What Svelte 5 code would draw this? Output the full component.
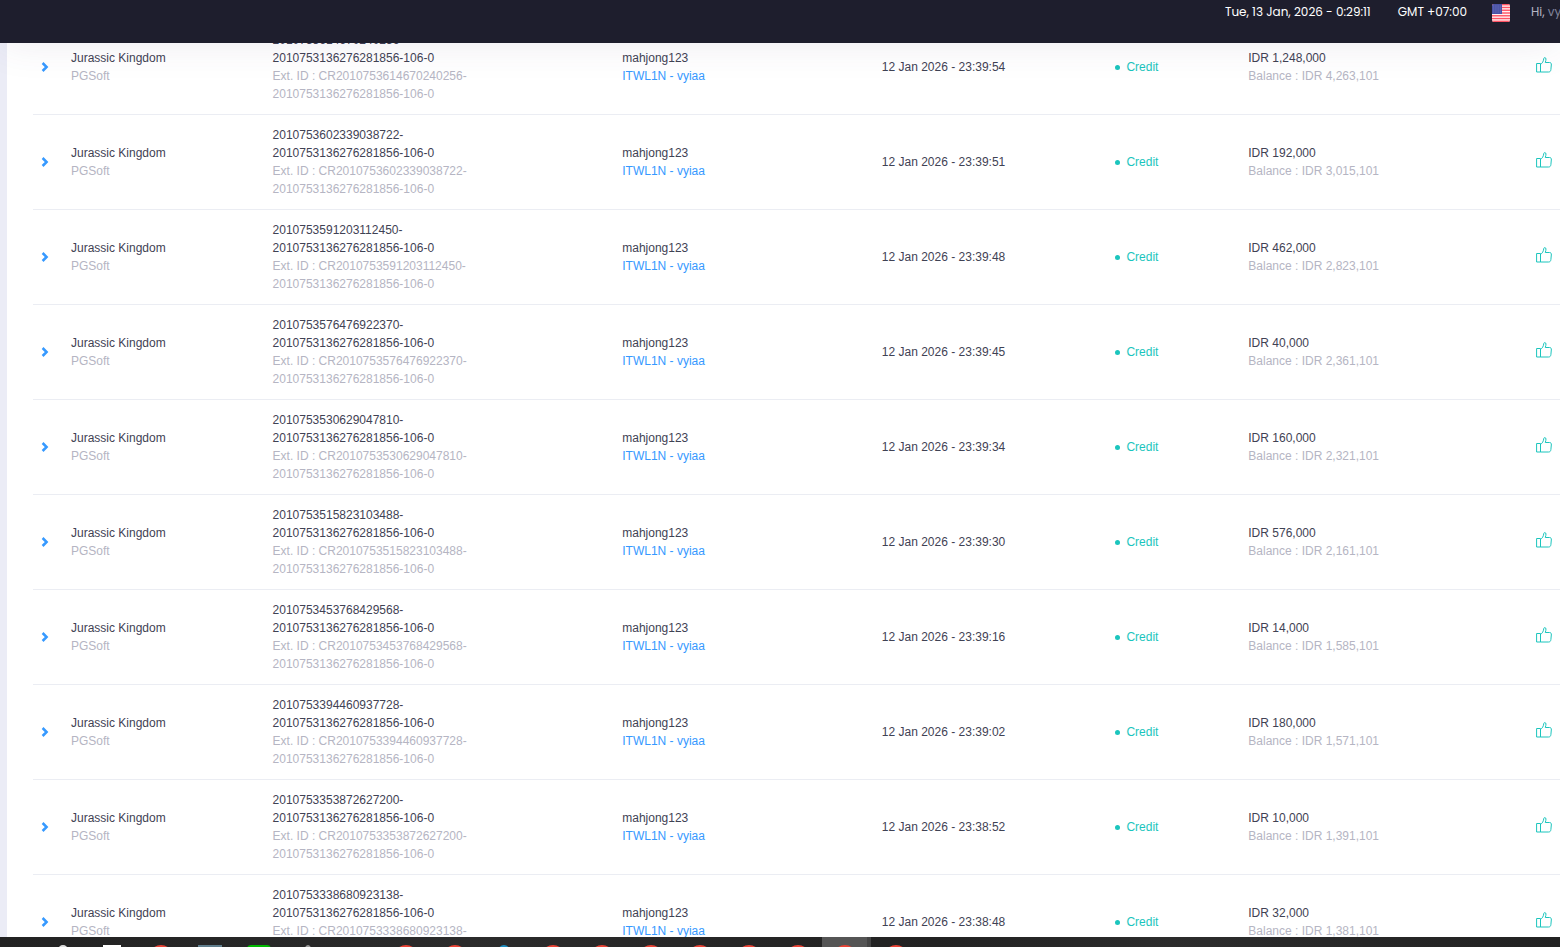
<script>
  const session = "2010753136276281856-106-0";

  const transactions = [
    { id: "2010753614670240256", time: "23:39:54", amount: "1,248,000", balance: "4,263,101" },
    { id: "2010753602339038722", time: "23:39:51", amount: "192,000", balance: "3,015,101" },
    { id: "2010753591203112450", time: "23:39:48", amount: "462,000", balance: "2,823,101" },
    { id: "2010753576476922370", time: "23:39:45", amount: "40,000", balance: "2,361,101" },
    { id: "2010753530629047810", time: "23:39:34", amount: "160,000", balance: "2,321,101" },
    { id: "2010753515823103488", time: "23:39:30", amount: "576,000", balance: "2,161,101" },
    { id: "2010753453768429568", time: "23:39:16", amount: "14,000", balance: "1,585,101" },
    { id: "2010753394460937728", time: "23:39:02", amount: "180,000", balance: "1,571,101" },
    { id: "2010753353872627200", time: "23:38:52", amount: "10,000", balance: "1,391,101" },
    { id: "2010753338680923138", time: "23:38:48", amount: "32,000", balance: "1,381,101" },
  ];

  const apps = [
    "search", "view", "red", "window", "green", "small", "none", "red", "red",
    "blue", "red", "red", "red", "red", "red", "red", "red", "red",
  ];
  const activeApp = 16;

  let expanded = $state(null);

  function toggle(id) {
    expanded = expanded === id ? null : id;
  }
</script>

<div class="page">
  <header class="topbar">
    <span class="clock">Tue, 13 Jan, 2026 - 0:29:11</span>
    <span class="zone">GMT +07:00</span>
    <button class="flag" aria-label="Language">
      <svg width="18" height="18" viewBox="0 0 18 18">
        <clipPath id="flag-clip"><rect width="18" height="18" rx="2" /></clipPath>
        <g clip-path="url(#flag-clip)">
          <rect width="18" height="18" fill="#fff1f1" />
          {#each [0, 1, 2, 3, 4, 5, 6] as i}
            <rect y={i * 2.77} width="18" height="1.4" fill="#ff5364" />
          {/each}
          <rect width="10" height="10" fill="#4a52a5" />
          {#each [2, 4, 6, 8] as y}
            <path d="M1 {y}h8" stroke="#8a90cc" stroke-width="0.6" stroke-dasharray="0.8 1" />
          {/each}
        </g>
      </svg>
    </button>
    <a class="user" href="#profile">Hi, <span>vyiaa</span></a>
  </header>

  <main class="content">
    <section class="card">
      <table>
        <colgroup>
          <col class="col-toggle" />
          <col class="col-game" />
          <col class="col-id" />
          <col class="col-player" />
          <col class="col-date" />
          <col class="col-type" />
          <col class="col-amount" />
          <col class="col-status" />
        </colgroup>
        <tbody>
          {#each transactions as tx (tx.id)}
            <tr>
              <td class="toggle-cell">
                <button
                  class="toggle"
                  aria-label="Details"
                  aria-expanded={expanded === tx.id}
                  onclick={() => toggle(tx.id)}
                >
                  <svg width="8" height="10" viewBox="0 0 8 10">
                    <path d="M1.6 1 5.6 5 1.6 9" fill="none" stroke="#3699ff" stroke-width="2.5" />
                  </svg>
                </button>
              </td>
              <td>
                <div>Jurassic Kingdom</div>
                <div class="muted">PGSoft</div>
              </td>
              <td>
                <div>{tx.id}-<br />{session}</div>
                <div class="muted">Ext. ID : CR{tx.id}-<br />{session}</div>
              </td>
              <td>
                <div>mahjong123</div>
                <a href="#player">ITWL1N - vyiaa</a>
              </td>
              <td>12 Jan 2026 - {tx.time}</td>
              <td><span class="credit">Credit</span></td>
              <td>
                <div>IDR {tx.amount}</div>
                <div class="muted">Balance : IDR {tx.balance}</div>
              </td>
              <td class="status-cell">
                <svg width="16" height="16" viewBox="0 0 16 16" role="img" aria-label="Success">
                  <path
                    d="M.6 6.500H4.500v8.500H.6zM4.500 7.500C6.300 6.200 7.400 4.500 7.700 2 7.800.9 8.300.5 8.900.6 10.300.8 10.200 2.500 9.300 5.500H13.500C15 5.500 15.500 6.500 15.300 8L14.900 12.500C14.700 14.200 14 15 12.500 15H4.500"
                    fill="none"
                    stroke="#1bc5bd"
                    stroke-linejoin="round"
                  />
                </svg>
              </td>
            </tr>
          {/each}
        </tbody>
      </table>
    </section>
  </main>

  <footer class="taskbar">
    {#each apps as app, i}
      <div class="task" class:active={i === activeApp}>
        <span class="app {app}"></span>
      </div>
    {/each}
  </footer>
</div>

<style>
  :global(body) {
    margin: 0;
    overflow: hidden;
  }

  .page {
    height: 100vh;
    display: flex;
    flex-direction: column;
    overflow: hidden;
    background: #ebecf6;
    font-family: "Liberation Sans", Arial, sans-serif;
    font-size: 12px;
    line-height: 18px;
    color: #3f4254;
  }

  .topbar {
    position: relative;
    z-index: 1;
    flex: 0 0 43px;
    display: flex;
    align-items: flex-start;
    justify-content: flex-end;
    box-sizing: border-box;
    padding-top: 3px;
    background: #1e1e2d;
    box-shadow: 0 0 40px rgba(82, 63, 105, 0.1);
    font-family: Poppins, Inter, sans-serif;
    color: #fff;
    white-space: nowrap;
  }

  .zone {
    margin-left: 27px;
  }

  .flag {
    display: flex;
    margin: 1px 21px 0 25px;
    padding: 0;
    border: 0;
    background: none;
    cursor: pointer;
  }

  .user {
    flex: 0 0 29px;
    min-width: 0;
    color: #b5b5c3;
    text-decoration: none;
  }

  .user span {
    color: #7e8299;
  }

  .content {
    flex: 1;
    min-height: 0;
    overflow: hidden;
    padding-left: 7px;
  }

  .card {
    padding-left: 26px;
    background: #fff;
  }

  table {
    width: 100%;
    margin-top: -23px;
    border-collapse: collapse;
    table-layout: fixed;
  }

  .col-toggle { width: 27px; }
  .col-game { width: 13.2%; }
  .col-id { width: 22.9%; }
  .col-player { width: 17%; }
  .col-date { width: 15.3%; }
  .col-type { width: 8.7%; }
  .col-status { width: 40px; }

  td {
    padding: 11px 0 11px 11px;
    border-bottom: 1px solid #ebedf3;
    vertical-align: middle;
  }

  td a {
    color: #3699ff;
    text-decoration: none;
  }

  .muted {
    color: #b5b5c3;
  }

  .toggle-cell {
    padding-left: 8px;
  }

  .toggle {
    display: block;
    padding: 0;
    border: 0;
    background: none;
    cursor: pointer;
  }

  .toggle svg {
    display: block;
  }

  .credit {
    display: flex;
    align-items: center;
    gap: 6px;
    color: #1bc5bd;
  }

  .credit::before {
    content: "";
    width: 5px;
    height: 5px;
    border-radius: 50%;
    background: #1bc5bd;
  }

  .status-cell {
    padding-right: 8px;
    text-align: right;
  }

  .taskbar {
    flex: 0 0 10px;
    display: flex;
    min-height: 0;
    box-sizing: border-box;
    padding-left: 38px;
    overflow: hidden;
    background: linear-gradient(90deg, #222, #2b2b2b 30%, #222 60%, #2c2c2c 75%, #222);
  }

  .task {
    flex: 0 0 49px;
    display: flex;
    justify-content: center;
    align-items: flex-start;
    box-sizing: border-box;
    padding-top: 8px;
  }

  .task.active {
    background: #555;
    border-right: 4px solid #444;
  }

  .app {
    width: 24px;
    height: 24px;
    flex-shrink: 0;
    box-sizing: border-box;
    border-radius: 50%;
  }

  .red {
    background: #ea4335;
  }

  .search {
    width: 10px;
    height: 10px;
    border: 2px solid #ddd;
  }

  .view {
    width: 18px;
    border-radius: 0;
    background: #fff;
  }

  .window {
    border-radius: 0;
    background: #5f7d8c;
  }

  .green {
    border-radius: 4px;
    background: #00b900;
  }

  .small {
    width: 10px;
    background: #999;
  }

  .blue {
    width: 16px;
    background: #1c8dc0;
  }
</style>
